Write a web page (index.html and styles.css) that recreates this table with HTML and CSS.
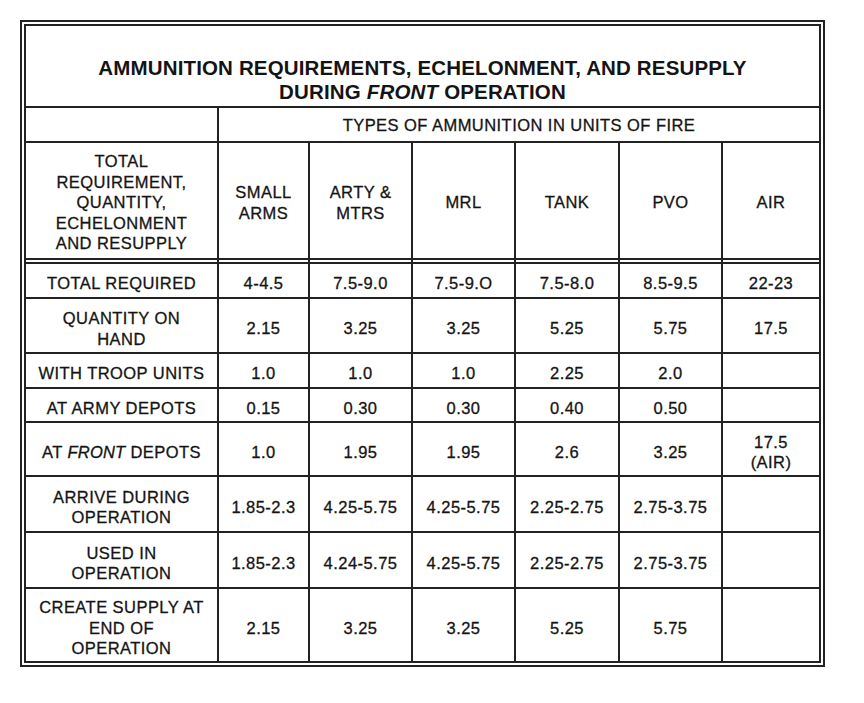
FILE: index.html
```html
<!DOCTYPE html>
<html lang="en">
<head>
<meta charset="utf-8">
<title>Ammunition Requirements</title>
<link rel="stylesheet" href="styles.css">
</head>
<body>
<div class="frame">
  <div class="grid">
    <div class="cell title"><span>AMMUNITION REQUIREMENTS, ECHELONMENT, AND RESUPPLY<br>DURING <i>FRONT</i> OPERATION</span></div>

    <div class="cell"></div>
    <div class="cell types"><span>TYPES OF AMMUNITION IN UNITS OF FIRE</span></div>

    <div class="cell head"><span>TOTAL<br>REQUIREMENT,<br>QUANTITY,<br>ECHELONMENT<br>AND RESUPPLY</span></div>
    <div class="cell head"><span>SMALL<br>ARMS</span></div>
    <div class="cell head"><span>ARTY &amp;<br>MTRS</span></div>
    <div class="cell head"><span>MRL</span></div>
    <div class="cell head"><span>TANK</span></div>
    <div class="cell head"><span>PVO</span></div>
    <div class="cell head"><span>AIR</span></div>

    <div class="cell"><span>TOTAL REQUIRED</span></div>
    <div class="cell"><span>4-4.5</span></div>
    <div class="cell"><span>7.5-9.0</span></div>
    <div class="cell"><span>7.5-9.O</span></div>
    <div class="cell"><span>7.5-8.0</span></div>
    <div class="cell"><span>8.5-9.5</span></div>
    <div class="cell"><span>22-23</span></div>

    <div class="cell"><span>QUANTITY ON<br>HAND</span></div>
    <div class="cell"><span>2.15</span></div>
    <div class="cell"><span>3.25</span></div>
    <div class="cell"><span>3.25</span></div>
    <div class="cell"><span>5.25</span></div>
    <div class="cell"><span>5.75</span></div>
    <div class="cell"><span>17.5</span></div>

    <div class="cell"><span>WITH TROOP UNITS</span></div>
    <div class="cell"><span>1.0</span></div>
    <div class="cell"><span>1.0</span></div>
    <div class="cell"><span>1.0</span></div>
    <div class="cell"><span>2.25</span></div>
    <div class="cell"><span>2.0</span></div>
    <div class="cell"></div>

    <div class="cell"><span>AT ARMY DEPOTS</span></div>
    <div class="cell"><span>0.15</span></div>
    <div class="cell"><span>0.30</span></div>
    <div class="cell"><span>0.30</span></div>
    <div class="cell"><span>0.40</span></div>
    <div class="cell"><span>0.50</span></div>
    <div class="cell"></div>

    <div class="cell"><span>AT <i>FRONT</i> DEPOTS</span></div>
    <div class="cell"><span>1.0</span></div>
    <div class="cell"><span>1.95</span></div>
    <div class="cell"><span>1.95</span></div>
    <div class="cell"><span>2.6</span></div>
    <div class="cell"><span>3.25</span></div>
    <div class="cell"><span>17.5<br>(AIR)</span></div>

    <div class="cell"><span>ARRIVE DURING<br>OPERATION</span></div>
    <div class="cell"><span>1.85-2.3</span></div>
    <div class="cell"><span>4.25-5.75</span></div>
    <div class="cell"><span>4.25-5.75</span></div>
    <div class="cell"><span>2.25-2.75</span></div>
    <div class="cell"><span>2.75-3.75</span></div>
    <div class="cell"></div>

    <div class="cell"><span>USED IN<br>OPERATION</span></div>
    <div class="cell"><span>1.85-2.3</span></div>
    <div class="cell"><span>4.24-5.75</span></div>
    <div class="cell"><span>4.25-5.75</span></div>
    <div class="cell"><span>2.25-2.75</span></div>
    <div class="cell"><span>2.75-3.75</span></div>
    <div class="cell"></div>

    <div class="cell"><span>CREATE SUPPLY AT<br>END OF<br>OPERATION</span></div>
    <div class="cell"><span>2.15</span></div>
    <div class="cell"><span>3.25</span></div>
    <div class="cell"><span>3.25</span></div>
    <div class="cell"><span>5.25</span></div>
    <div class="cell"><span>5.75</span></div>
    <div class="cell"></div>
  </div>
</div>
</body>
</html>
```

FILE: styles.css
```css
html, body {
  margin: 0;
  padding: 0;
  background: #ffffff;
}

body {
  font-family: "Liberation Sans", Arial, sans-serif;
  color: #141414;
}

.frame {
  margin: 20px 0 0 20px;
  width: 805px;
  box-sizing: border-box;
  border: 2px solid #222;
  padding: 2px;
  background: #fff;
}

.grid {
  display: grid;
  grid-template-columns: 191px 89px 101px 101px 102px 101px 96px;
  grid-template-rows: 80px 33px 119px 33px 53px 33px 32px 52px 54px 54px 72px;
  gap: 2px;
  padding: 2px;
  background: #222;
}

.cell {
  background: #fff;
  display: flex;
  align-items: center;
  justify-content: center;
  text-align: center;
  font-size: 16.5px;
  letter-spacing: 0.45px;
  line-height: 20.5px;
  padding-top: 6px;
  box-sizing: border-box;
  -webkit-text-stroke: 0.3px #141414;
}

.cell i {
  letter-spacing: 0.2px;
}

.title {
  grid-column: 1 / -1;
  align-items: flex-start;
  padding-top: 30px;
  font-size: 20.5px;
  font-weight: bold;
  line-height: 23.5px;
  letter-spacing: 0.15px;
  -webkit-text-stroke: 0;
}

.types {
  grid-column: 2 / -1;
  padding-top: 2px;
}

.head {
  padding-top: 0;
  padding-bottom: 0;
  background: linear-gradient(#222, #222) left 0 bottom 2px / 100% 2px no-repeat, #fff;
}
```
